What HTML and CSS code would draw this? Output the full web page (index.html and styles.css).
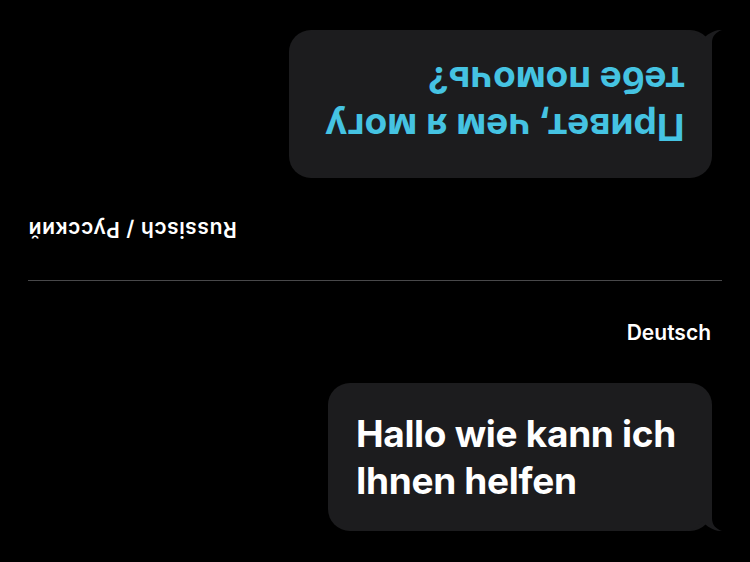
FILE: index.html
```html
<!DOCTYPE html>
<html lang="de">
<head>
  <meta charset="UTF-8" />
  <meta name="viewport" content="width=device-width, initial-scale=1.0"/>
  <title>Konversation</title>
  <link rel="stylesheet" href="styles.css">
</head>
<body>

  <section class="side side-other">
    <div class="bubble bubble-flipped">
      <p class="bubble-text">Привет, чем я могу<br>тебе помочь?</p>
      <svg class="tail" width="38" height="26" viewBox="0 0 38 26">
        <path d="M0 0H26V13C26 20 30 24 36 26C29 26.5 21 22 16 16C13 21 7 25 0 26Z"/>
      </svg>
    </div>
    <div class="lang-row">
      <span class="lang lang-upside">Russisch / Русский</span>
    </div>
  </section>

  <hr class="divider">

  <section class="side side-me">
    <div class="lang-row lang-row-right">
      <span class="lang">Deutsch</span>
    </div>
    <div class="bubble">
      <p class="bubble-text">Hallo wie kann ich<br>Ihnen helfen</p>
      <svg class="tail" width="38" height="26" viewBox="0 0 38 26">
        <path d="M0 0H26V13C26 20 30 24 36 26C29 26.5 21 22 16 16C13 21 7 25 0 26Z"/>
      </svg>
    </div>
  </section>

</body>
</html>
```

FILE: styles.css
```css
html, body {
  margin: 0;
  background: #000;
}

body {
  font-family: Inter, "Noto Sans", sans-serif;
  color: #fff;
  padding: 30px 28px 0;
  width: 694px;
}

.side {
  display: flex;
  flex-direction: column;
}

.bubble {
  position: relative;
  align-self: flex-end;
  margin-right: 10px;
  background: #1c1c1e;
  border-radius: 22px;
  padding: 27px 36px 27px 28px;
}

/* tail sits over the bottom right corner */
.tail {
  position: absolute;
  right: -12px;
  bottom: 0;
  display: block;
  fill: #1c1c1e;
}

.bubble-text {
  margin: 0;
  font-size: 37px;
  line-height: 47px;
  font-weight: 700;
  letter-spacing: -0.3px;
  white-space: nowrap;
}

/* the other person reads from the far side of the phone */
.bubble-flipped {
  transform: scaleY(-1);
  padding-left: 36px;
  padding-right: 28px;
}

.bubble-flipped .bubble-text {
  transform: scaleX(-1);
  color: #45c3e2;
  letter-spacing: 0;
}

.lang-row {
  display: flex;
  margin: 39px 0 38px;
}

.lang-row-right {
  justify-content: flex-end;
  margin: 39px 11px 38px 0;
}

.lang {
  display: inline-block;
  font-size: 21px;
  line-height: 25px;
  font-weight: 600;
}

.lang-upside {
  transform: rotate(180deg);
  letter-spacing: 0.6px;
}

.divider {
  margin: 0;
  border: none;
  border-top: 1px solid #48484a;
}
```
